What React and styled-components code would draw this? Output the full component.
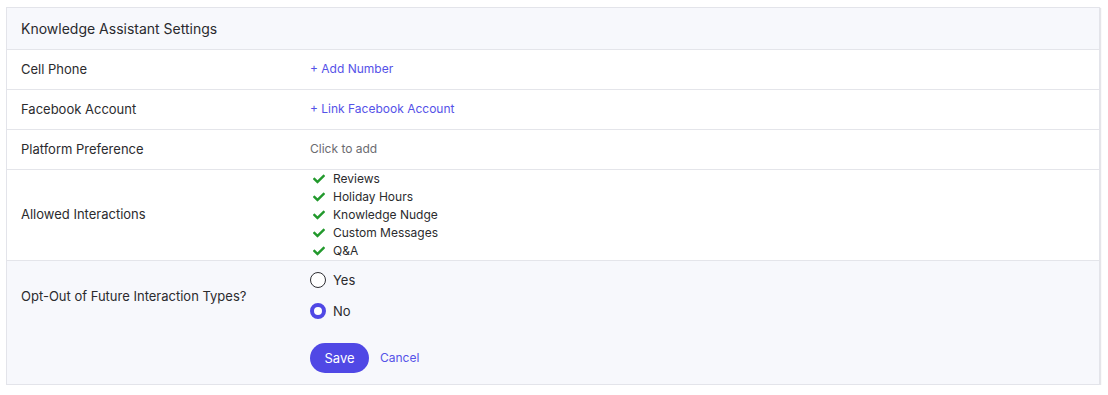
import React, { useState } from "react";
import styled, { createGlobalStyle } from "styled-components";
import { FaCheck } from "react-icons/fa";

const Global = createGlobalStyle`
  * { box-sizing: border-box; }
  body {
    margin: 0;
    padding: 7px 8px 0 6px;
    background: #ffffff;
    font-family: Inter, "Noto Sans", sans-serif;
    color: #2b2b2e;
  }
`;

const Card = styled.section`
  border: 1px solid #e3e4ea;
  box-shadow: 1px 1px 1px rgba(40, 40, 70, 0.12);
  background: #fff;
`;

const Header = styled.div`
  height: 42px;
  display: flex;
  align-items: center;
  padding: 0 14px;
  background: #f7f8fc;
  border-bottom: 1px solid #e4e5ea;
  font-size: 14px;
  line-height: 16px;
  color: #2a2a2e;
`;

const Row = styled.div`
  display: grid;
  grid-template-columns: 303px 1fr;
  align-items: center;
  min-height: ${(p) => p.$h || 40}px;
  border-bottom: 1px solid #e4e5ea;
  background: #fff;
  padding-bottom: ${(p) => p.$pb ?? 1}px;
`;

const Label = styled.div`
  padding-left: 14px;
  font-size: 13px;
  line-height: 16px;
  color: #2b2b2e;
  margin-bottom: ${(p) => p.$lift || 0}px;
`;

const Value = styled.div`
  display: flex;
  align-items: center;
  line-height: 16px;
`;

const LinkText = styled.a`
  font-size: 12px;
  line-height: 16px;
  color: #5552e8;
  text-decoration: none;
  cursor: pointer;
`;

const Muted = styled.span`
  font-size: 12px;
  line-height: 16px;
  color: #6b6b70;
`;

const CheckList = styled.ul`
  list-style: none;
  margin: 0;
  padding: 0;
`;

const CheckItem = styled.li`
  display: flex;
  align-items: center;
  height: 18px;
  padding-bottom: 1px;
  font-size: 12px;
  line-height: 16px;
  color: #2b2b2e;
  gap: 7px;
  padding-left: 2px;
  svg { color: #22992c; width: 14px; height: 12px; }
`;

const OptOut = styled.div`
  background: #f7f8fc;
  padding: 11px 0 11px;
`;

const OptRow = styled.div`
  display: grid;
  grid-template-columns: 303px 1fr;
  align-items: center;
`;

const RadioGroup = styled.div`
  display: flex;
  flex-direction: column;
  gap: 15px;
`;

const RadioLabel = styled.label`
  display: flex;
  align-items: center;
  gap: 7px;
  height: 16px;
  font-size: 13px;
  color: #2b2b2e;
  cursor: pointer;
`;

const RadioDot = styled.span`
  width: 16px;
  height: 16px;
  border-radius: 50%;
  background: #fff;
  border: ${(p) => (p.$on ? "4.5px solid #5048e5" : "1.5px solid #2e2e33")};
`;

const Actions = styled.div`
  display: flex;
  align-items: center;
  gap: 11px;
  margin: 24px 0 0 303px;
`;

const SaveButton = styled.button`
  height: 30px;
  width: 59px;
  border: none;
  border-radius: 15px;
  background: #5048e5;
  color: #fff;
  font-family: inherit;
  font-size: 13px;
  cursor: pointer;
`;

const CancelLink = styled(LinkText)``;

export default function App() {
  const [opt, setOpt] = useState("no");
  const items = ["Reviews", "Holiday Hours", "Knowledge Nudge", "Custom Messages", "Q&A"];
  return (
    <>
      <Global />
      <Card>
        <Header>Knowledge Assistant Settings</Header>
        <Row>
          <Label>Cell Phone</Label>
          <Value><LinkText>+ Add Number</LinkText></Value>
        </Row>
        <Row>
          <Label>Facebook Account</Label>
          <Value><LinkText>+ Link Facebook Account</LinkText></Value>
        </Row>
        <Row>
          <Label>Platform Preference</Label>
          <Value><Muted>Click to add</Muted></Value>
        </Row>
        <Row $h={91} $pb={0}>
          <Label $lift={2}>Allowed Interactions</Label>
          <CheckList>
            {items.map((t) => (
              <CheckItem key={t}>
                <FaCheck />
                {t}
              </CheckItem>
            ))}
          </CheckList>
        </Row>
        <OptOut>
          <OptRow>
            <Label>Opt-Out of Future Interaction Types?</Label>
            <RadioGroup>
              <RadioLabel onClick={() => setOpt("yes")}>
                <RadioDot $on={opt === "yes"} />
                Yes
              </RadioLabel>
              <RadioLabel onClick={() => setOpt("no")}>
                <RadioDot $on={opt === "no"} />
                No
              </RadioLabel>
            </RadioGroup>
          </OptRow>
          <Actions>
            <SaveButton>Save</SaveButton>
            <CancelLink>Cancel</CancelLink>
          </Actions>
        </OptOut>
      </Card>
    </>
  );
}
